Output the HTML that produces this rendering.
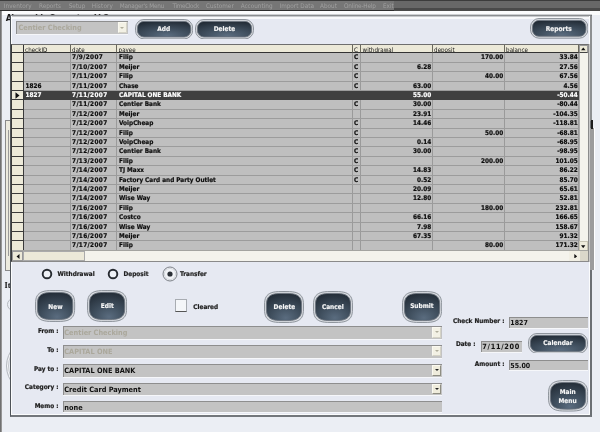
<!DOCTYPE html>
<html><head><meta charset="utf-8"><title>Checking</title>
<style>
*{box-sizing:border-box;margin:0;padding:0}
html,body{width:600px;height:432px;overflow:hidden;background:#ebeef4;font-family:"DejaVu Sans Condensed","Liberation Sans",sans-serif;}
.abs{position:absolute}
#menubar{position:absolute;left:0;top:0;width:600px;height:12px;background:linear-gradient(#3c3c3c 0,#3c3c3c 1px,#686868 1px,#686868 8px,#4a4a4a 8px,#4a4a4a 11px,#a0a0a0 11px)}
#mstrip{position:absolute;left:0;top:1px;width:394px;height:11px;background:linear-gradient(#767676 0,#767676 9px,#2e2e2e 9px,#2e2e2e 10px,#8c8c8c 10px)}
#menubar span{position:absolute;top:1.7px;font-size:6.35px;line-height:8px;color:#a0a0a0;white-space:nowrap}
#dlg{position:absolute;left:10px;top:15px;width:582px;height:402px;background:#e6e9f2;border:1px solid #4e5358;border-right:2px solid #6c7074;border-bottom:2px solid #73777c;border-top:1px solid #8a8d90;box-shadow:inset 1px 0 0 #fbfcfd,inset -1px -1px 0 #fbfcfd,inset 0 1px 0 #c6c8cb,inset 0 3px 0 #f8f9fb, 0 -1px 0 #cdcfd2}
#grid{position:absolute;left:11px;top:43.7px;width:578px;height:218.5px;background:#bfbfbf;border:1px solid #3a3a3a;border-top:1px solid #6e6e6e;border-right:1px solid #8c8c8c;border-bottom:1px solid #8a8a8a}
.hdr{position:absolute;top:44.6px;height:8.4px;background:#ece9d8;border-right:1px solid #6a685c;border-bottom:1px solid #333;font-size:6.2px;line-height:9.6px;color:#111;padding-left:1.6px;white-space:nowrap;overflow:hidden}
.row{position:absolute;left:12px;width:567px;height:9.4px;background:#bfbfbf;border-bottom:1px solid #9c9c9c;font-weight:bold;font-size:6.4px;line-height:9.6px;color:#0c0c0c;-webkit-text-stroke:0.18px}
.row.sel{background:#404040;color:#fff;border-bottom-color:#404040}
.c{position:absolute;top:0;height:100%;border-right:1px solid #9a9a9a;white-space:nowrap;overflow:hidden;padding-left:2px}
.sel .c{border-right-color:#404040}
.row .c0{left:0;width:11.5px;height:9.4px;background:#ece9d8;border-bottom:1px solid #3a3a3a;border-right:1px solid #3a3a3a}
.c1{left:11.5px;width:47px}
.c2{left:58.5px;width:46.5px;letter-spacing:0.38px;padding-left:1.5px}
.c3{left:105px;width:235.5px}
.c4{left:340.5px;width:8.5px;padding-left:1.5px}
.c5{left:349px;width:71.5px;text-align:right;padding-right:0.3px}
.c6{left:420.5px;width:72px;text-align:right;padding-right:0.3px}
.c7{left:492.5px;width:74.5px;text-align:right;padding-right:0.3px}
.btn{position:absolute}
.btn svg{position:absolute;left:0;top:0;display:block}
.btn i{position:absolute;left:0;top:0;right:0;bottom:0;font-style:normal;color:#f6f6f6;font-weight:bold;font-size:6.5px;display:flex;align-items:center;justify-content:center;text-align:center;line-height:8.3px;-webkit-text-stroke:0.15px #f6f6f6}
.lbl{position:absolute;margin-top:0.9px;-webkit-text-stroke:0.2px #1c1c1c;font-weight:bold;font-size:6.4px;line-height:9px;color:#1c1c1c;white-space:nowrap}
.lbl.r{text-align:right}
.fld{position:absolute;box-shadow:0 1px 0 #f6f7fa;background:#c3c3c3;border-top:1px solid #8e8e8e;border-left:1px solid #8e8e8e;font-weight:bold;font-size:7.3px;color:#111;padding-left:0.8px;white-space:nowrap;overflow:hidden}
.fld.dis{color:#aba89c}
.dd{position:absolute;width:9px;height:10.4px;background:#efecdc;border:1px solid #fbfaf2;border-right-color:#8f8e82;border-bottom-color:#8f8e82}
.dd.dis{background:#f3f1e5;border-color:#faf9f1;border-right-color:#d5d3c6;border-bottom-color:#d5d3c6}
.dd:after{content:"";position:absolute;left:1.3px;top:3.2px;border:2.2px solid transparent;border-top:2.6px solid #222;border-bottom:0}
.dd.dis:after{border-top-color:#b0ad9c}
.radio{position:absolute;width:12px;height:12px}
</style></head><body><div id="wrap" style="position:absolute;left:0;top:0;width:600px;height:432px;will-change:transform">
<svg width="0" height="0" style="position:absolute"><defs><radialGradient id="bg" cx="0.55" cy="0.9" r="0.95"><stop offset="0" stop-color="#5a6c7f"/><stop offset="0.45" stop-color="#3f4e5d"/><stop offset="1" stop-color="#212a34"/></radialGradient></defs></svg>
<div id="menubar"><div id="mstrip"></div><span style="left:3.7px;letter-spacing:0.08px">Inventory</span><span style="left:39px;letter-spacing:0px">Reports</span><span style="left:68.7px;letter-spacing:0px">Setup</span><span style="left:91.7px;letter-spacing:0.15px">History</span><span style="left:119.7px;letter-spacing:-0.18px">Manager's Menu</span><span style="left:172.5px;letter-spacing:-0.33px">TimeClock</span><span style="left:206px;letter-spacing:0px">Customer</span><span style="left:240.7px;letter-spacing:0px">Accounting</span><span style="left:279.5px;letter-spacing:0px">Import Data</span><span style="left:320px;letter-spacing:0px">About</span><span style="left:344px;letter-spacing:-0.16px">Online-Help</span><span style="left:383px;letter-spacing:0px">Exit</span></div>
<div class="abs" style="left:2px;top:11px;width:598px;height:4px;background:#fbfcfd"></div>
<div class="abs" style="left:0;top:11px;width:2.2px;height:421px;background:linear-gradient(90deg,#5e5e5e,#a8a8a8)"></div>
<div class="abs" style="left:5.8px;top:11.9px;font-weight:bold;font-size:9.3px;line-height:11px;color:#1a1a1a;white-space:nowrap;letter-spacing:-0.95px">Alexandria Computers LLC</div>
<div class="abs" style="left:5.3px;top:119.5px;width:6px;height:151px;background:#eceade;border:1px solid #8a8a8a"></div>
<div class="abs" style="left:8.3px;top:130px;width:3px;height:126px;border-left:1px solid #9a9a9a"></div>
<div class="abs" style="left:4.6px;top:280.5px;font-family:'Liberation Serif',serif;font-weight:bold;font-size:8.3px;line-height:10px;color:#111">It</div>
<div class="abs" style="left:7px;top:297.5px;width:13px;height:13px;border-radius:50%;border:1px solid #b4b8be"></div>
<div class="abs" style="left:6px;top:338px;width:56px;height:56px;border-radius:50%;border:1px solid #b4b8be;box-shadow:inset 0 0 0 1px #f8f9fb, inset 0 0 0 2px #c4c8cd"></div>
<div id="dlg"></div>
<div class="abs" style="left:11px;top:11.9px;height:3.6px;width:110px;overflow:hidden"><div class="abs" style="left:-5.2px;top:0;font-weight:bold;font-size:9.3px;line-height:11px;color:#333;white-space:nowrap;letter-spacing:-0.95px">Alexandria Computers LLC</div></div>

<div class="abs" style="left:590px;top:16px;width:2px;height:105px;background:#8e9092"></div>
<div class="abs" style="left:590px;top:128px;width:4px;height:142px;background:#9c9c9c"></div>
<div class="abs" style="left:591px;top:120px;width:2px;height:9px;background:#1c1c1c"></div>
<div class="abs" style="left:594px;top:128px;width:1px;height:142px;background:#fff"></div>
<!-- top controls -->
<div class="fld dis" style="left:16px;top:21px;width:111.5px;height:13px;line-height:12px;padding-left:1.5px">Centier Checking</div>
<div class="dd dis" style="left:117.6px;top:22.4px;height:10.8px"></div>
<div class="btn" style="left:134.6px;top:18.5px;width:58.2px;height:20.4px"><svg width="58.2" height="20.4" viewBox="0 0 58.2 20.4"><rect x="0.5" y="0.5" width="57.2" height="19.4" rx="8.5" ry="8.5" fill="#d9dce1" stroke="#858b93" stroke-width="0.9"/><rect x="2.4" y="2.4" width="53.400000000000006" height="15.599999999999998" rx="6.5" ry="6.5" fill="url(#bg)" stroke="#6c747e" stroke-width="0.9"/></svg><i style="padding-top:1.6px">Add</i></div>
<div class="btn" style="left:195px;top:18.5px;width:59px;height:20.4px"><svg width="59" height="20.4" viewBox="0 0 59 20.4"><rect x="0.5" y="0.5" width="58" height="19.4" rx="8.5" ry="8.5" fill="#d9dce1" stroke="#858b93" stroke-width="0.9"/><rect x="2.4" y="2.4" width="54.2" height="15.599999999999998" rx="6.5" ry="6.5" fill="url(#bg)" stroke="#6c747e" stroke-width="0.9"/></svg><i style="padding-top:1.6px">Delete</i></div>
<div class="btn" style="left:529.6px;top:18.1px;width:58.4px;height:20.7px"><svg width="58.4" height="20.7" viewBox="0 0 58.4 20.7"><rect x="0.5" y="0.5" width="57.4" height="19.7" rx="8.5" ry="8.5" fill="#d9dce1" stroke="#858b93" stroke-width="0.9"/><rect x="2.4" y="2.4" width="53.6" height="15.899999999999999" rx="6.5" ry="6.5" fill="url(#bg)" stroke="#6c747e" stroke-width="0.9"/></svg><i style="padding-top:1.6px">Reports</i></div>

<!-- grid -->
<div id="grid"></div><div class="abs" style="left:589px;top:44px;width:1px;height:218px;background:#c8c8c8"></div>
<div class="hdr" style="left:12px;width:11.5px;border-right-color:#333"></div>
<div class="hdr" style="left:23.5px;width:47px">checkID</div>
<div class="hdr" style="left:70.5px;width:46.5px">date</div>
<div class="hdr" style="left:117px;width:235.5px">payee</div>
<div class="hdr" style="left:352.5px;width:8.5px;padding-left:1.5px">C</div>
<div class="hdr" style="left:361px;width:71.5px">withdrawal</div>
<div class="hdr" style="left:432.5px;width:72px">deposit</div>
<div class="hdr" style="left:504.5px;width:74.5px">balance</div>
<div class="row" style="top:53.4px"><span class="c c0"></span><span class="c c1"></span><span class="c c2">7/9/2007</span><span class="c c3">Filip</span><span class="c c4">C</span><span class="c c5"></span><span class="c c6">170.00</span><span class="c c7">33.84</span></div>
<div class="row" style="top:62.8px"><span class="c c0"></span><span class="c c1"></span><span class="c c2">7/10/2007</span><span class="c c3">Meijer</span><span class="c c4">C</span><span class="c c5">6.28</span><span class="c c6"></span><span class="c c7">27.56</span></div>
<div class="row" style="top:72.2px"><span class="c c0"></span><span class="c c1"></span><span class="c c2">7/11/2007</span><span class="c c3">Filip</span><span class="c c4">C</span><span class="c c5"></span><span class="c c6">40.00</span><span class="c c7">67.56</span></div>
<div class="row" style="top:81.6px"><span class="c c0"></span><span class="c c1">1826</span><span class="c c2">7/11/2007</span><span class="c c3">Chase</span><span class="c c4">C</span><span class="c c5">63.00</span><span class="c c6"></span><span class="c c7">4.56</span></div>
<div class="row sel" style="top:91.0px"><span class="c c0"></span><span class="c c1">1827</span><span class="c c2">7/11/2007</span><span class="c c3">CAPITAL ONE BANK</span><span class="c c4"></span><span class="c c5">55.00</span><span class="c c6"></span><span class="c c7">-50.44</span></div>
<div class="row" style="top:100.4px"><span class="c c0"></span><span class="c c1"></span><span class="c c2">7/11/2007</span><span class="c c3">Centier Bank</span><span class="c c4">C</span><span class="c c5">30.00</span><span class="c c6"></span><span class="c c7">-80.44</span></div>
<div class="row" style="top:109.8px"><span class="c c0"></span><span class="c c1"></span><span class="c c2">7/12/2007</span><span class="c c3">Meijer</span><span class="c c4"></span><span class="c c5">23.91</span><span class="c c6"></span><span class="c c7">-104.35</span></div>
<div class="row" style="top:119.2px"><span class="c c0"></span><span class="c c1"></span><span class="c c2">7/12/2007</span><span class="c c3">VoipCheap</span><span class="c c4">C</span><span class="c c5">14.46</span><span class="c c6"></span><span class="c c7">-118.81</span></div>
<div class="row" style="top:128.6px"><span class="c c0"></span><span class="c c1"></span><span class="c c2">7/12/2007</span><span class="c c3">Filip</span><span class="c c4">C</span><span class="c c5"></span><span class="c c6">50.00</span><span class="c c7">-68.81</span></div>
<div class="row" style="top:138.0px"><span class="c c0"></span><span class="c c1"></span><span class="c c2">7/12/2007</span><span class="c c3">VoipCheap</span><span class="c c4">C</span><span class="c c5">0.14</span><span class="c c6"></span><span class="c c7">-68.95</span></div>
<div class="row" style="top:147.4px"><span class="c c0"></span><span class="c c1"></span><span class="c c2">7/12/2007</span><span class="c c3">Centier Bank</span><span class="c c4">C</span><span class="c c5">30.00</span><span class="c c6"></span><span class="c c7">-98.95</span></div>
<div class="row" style="top:156.8px"><span class="c c0"></span><span class="c c1"></span><span class="c c2">7/13/2007</span><span class="c c3">Filip</span><span class="c c4">C</span><span class="c c5"></span><span class="c c6">200.00</span><span class="c c7">101.05</span></div>
<div class="row" style="top:166.2px"><span class="c c0"></span><span class="c c1"></span><span class="c c2">7/14/2007</span><span class="c c3">TJ Maxx</span><span class="c c4">C</span><span class="c c5">14.83</span><span class="c c6"></span><span class="c c7">86.22</span></div>
<div class="row" style="top:175.6px"><span class="c c0"></span><span class="c c1"></span><span class="c c2">7/14/2007</span><span class="c c3">Factory Card and Party Outlet</span><span class="c c4">C</span><span class="c c5">0.52</span><span class="c c6"></span><span class="c c7">85.70</span></div>
<div class="row" style="top:185.0px"><span class="c c0"></span><span class="c c1"></span><span class="c c2">7/14/2007</span><span class="c c3">Meijer</span><span class="c c4"></span><span class="c c5">20.09</span><span class="c c6"></span><span class="c c7">65.61</span></div>
<div class="row" style="top:194.4px"><span class="c c0"></span><span class="c c1"></span><span class="c c2">7/14/2007</span><span class="c c3">Wise Way</span><span class="c c4"></span><span class="c c5">12.80</span><span class="c c6"></span><span class="c c7">52.81</span></div>
<div class="row" style="top:203.8px"><span class="c c0"></span><span class="c c1"></span><span class="c c2">7/16/2007</span><span class="c c3">Filip</span><span class="c c4"></span><span class="c c5"></span><span class="c c6">180.00</span><span class="c c7">232.81</span></div>
<div class="row" style="top:213.2px"><span class="c c0"></span><span class="c c1"></span><span class="c c2">7/16/2007</span><span class="c c3">Costco</span><span class="c c4"></span><span class="c c5">66.16</span><span class="c c6"></span><span class="c c7">166.65</span></div>
<div class="row" style="top:222.6px"><span class="c c0"></span><span class="c c1"></span><span class="c c2">7/16/2007</span><span class="c c3">Wise Way</span><span class="c c4"></span><span class="c c5">7.98</span><span class="c c6"></span><span class="c c7">158.67</span></div>
<div class="row" style="top:232.0px"><span class="c c0"></span><span class="c c1"></span><span class="c c2">7/16/2007</span><span class="c c3">Meijer</span><span class="c c4"></span><span class="c c5">67.35</span><span class="c c6"></span><span class="c c7">91.32</span></div>
<div class="row" style="top:241.4px"><span class="c c0"></span><span class="c c1"></span><span class="c c2">7/17/2007</span><span class="c c3">Filip</span><span class="c c4"></span><span class="c c5"></span><span class="c c6">80.00</span><span class="c c7">171.32</span></div>
<!-- row pointer -->
<svg class="abs" style="left:15px;top:92px" width="5" height="7" viewBox="0 0 5 7"><path d="M0.5 0.3 L4.5 3.5 L0.5 6.7 Z" fill="#111"/></svg>
<!-- v scrollbar -->
<div class="abs" style="left:579px;top:44.6px;width:9px;height:206px;background:#f4f3ec;border-left:1px solid #aaa"></div>
<div class="abs" style="left:579px;top:44.6px;width:9px;height:8.4px;background:#ece9d8;border:1px solid #999;border-bottom-color:#444"></div>
<svg class="abs" style="left:581.2px;top:47px" width="4.6" height="3.6" viewBox="0 0 5 4"><path d="M0 3.5 L2.5 0.5 L5 3.5 Z" fill="#111"/></svg>
<div class="abs" style="left:579px;top:241px;width:9px;height:9.5px;background:#efecdd;border:1px solid #c9c6b6"></div>
<svg class="abs" style="left:581.3px;top:245px" width="4.4" height="3.4" viewBox="0 0 4.4 3.4"><path d="M0 0.3 L2.2 3.2 L4.4 0.3 Z" fill="#111"/></svg>
<!-- h scrollbar -->
<div class="abs" style="left:12px;top:250.4px;width:576px;height:10.8px;background:#f4f3ec;border-top:1px solid #a4a4a0"></div>
<div class="abs" style="left:12px;top:251px;width:11px;height:10px;background:#ece9d8;border:1px solid #999"></div>
<svg class="abs" style="left:16px;top:253.5px" width="4" height="5" viewBox="0 0 4 5"><path d="M3.5 0 L0.5 2.5 L3.5 5 Z" fill="#111"/></svg>
<div class="abs" style="left:23px;top:251px;width:62px;height:10px;background:#ece9d8;border:1px solid #aaa"></div>
<div class="abs" style="left:569px;top:251px;width:10.5px;height:10px;background:#f1efe4"></div>
<svg class="abs" style="left:573.8px;top:253.6px" width="3.4" height="4.6" viewBox="0 0 3.4 4.6"><path d="M0.3 0 L3.2 2.3 L0.3 4.6 Z" fill="#111"/></svg>
<div class="abs" style="left:579.6px;top:251px;width:8.4px;height:9.6px;background:#dad7ca"></div>

<!-- radios -->
<svg class="abs" style="left:41.2px;top:267.7px" width="12" height="12" viewBox="0 0 12 12"><circle cx="6" cy="6" r="4.3" fill="#eef1f6" stroke="#262a30" stroke-width="1.9"/></svg><div class="lbl" style="left:57.5px;top:269.2px">Withdrawal</div>
<svg class="abs" style="left:107.4px;top:267.7px" width="12" height="12" viewBox="0 0 12 12"><circle cx="6" cy="6" r="4.3" fill="#eef1f6" stroke="#262a30" stroke-width="1.9"/></svg><div class="lbl" style="left:123.5px;top:269.2px">Deposit</div>
<svg class="abs" style="left:161.5px;top:265.7px" width="16" height="16" viewBox="0 0 16 16"><circle cx="8" cy="8" r="7" fill="#f1f3f7" stroke="#6e737a" stroke-width="0.9"/><circle cx="8" cy="8" r="5.6" fill="none" stroke="#c9cdd3" stroke-width="0.7"/><circle cx="8" cy="8" r="2.6" fill="#2a2f36"/></svg><div class="lbl" style="left:180px;top:269.2px">Transfer</div>

<!-- buttons row -->
<div class="btn" style="left:35.4px;top:290.4px;width:40.2px;height:32px"><svg width="40.2" height="32" viewBox="0 0 40.2 32"><path d="M39.70 16.00L39.60 20.51L39.29 22.83L38.78 24.66L38.06 26.18L37.13 27.47L35.99 28.56L34.61 29.47L32.98 30.21L31.05 30.77L28.74 31.18L25.81 31.42L20.10 31.50L14.39 31.42L11.46 31.18L9.15 30.77L7.22 30.21L5.59 29.47L4.21 28.56L3.07 27.47L2.14 26.18L1.42 24.66L0.91 22.83L0.60 20.51L0.50 16.00L0.60 11.49L0.91 9.17L1.42 7.34L2.14 5.82L3.07 4.53L4.21 3.44L5.59 2.53L7.22 1.79L9.15 1.23L11.46 0.82L14.39 0.58L20.10 0.50L25.81 0.58L28.74 0.82L31.05 1.23L32.98 1.79L34.61 2.53L35.99 3.44L37.13 4.53L38.06 5.82L38.78 7.34L39.29 9.17L39.60 11.49Z" fill="#d9dce1" stroke="#858b93" stroke-width="0.9"/><path d="M37.80 16.00L37.71 19.96L37.43 21.99L36.97 23.60L36.32 24.94L35.48 26.07L34.45 27.02L33.20 27.82L31.73 28.46L29.99 28.96L27.90 29.32L25.25 29.53L20.10 29.60L14.95 29.53L12.30 29.32L10.21 28.96L8.47 28.46L7.00 27.82L5.75 27.02L4.72 26.07L3.88 24.94L3.23 23.60L2.77 21.99L2.49 19.96L2.40 16.00L2.49 12.04L2.77 10.01L3.23 8.40L3.88 7.06L4.72 5.93L5.75 4.98L7.00 4.18L8.47 3.54L10.21 3.04L12.30 2.68L14.95 2.47L20.10 2.40L25.25 2.47L27.90 2.68L29.99 3.04L31.73 3.54L33.20 4.18L34.45 4.98L35.48 5.93L36.32 7.06L36.97 8.40L37.43 10.01L37.71 12.04Z" fill="url(#bg)" stroke="#6c747e" stroke-width="0.9"/></svg><i style="padding-top:0.6px">New</i></div>
<div class="btn" style="left:87.2px;top:289.7px;width:40.2px;height:32px"><svg width="40.2" height="32" viewBox="0 0 40.2 32"><path d="M39.70 16.00L39.60 20.51L39.29 22.83L38.78 24.66L38.06 26.18L37.13 27.47L35.99 28.56L34.61 29.47L32.98 30.21L31.05 30.77L28.74 31.18L25.81 31.42L20.10 31.50L14.39 31.42L11.46 31.18L9.15 30.77L7.22 30.21L5.59 29.47L4.21 28.56L3.07 27.47L2.14 26.18L1.42 24.66L0.91 22.83L0.60 20.51L0.50 16.00L0.60 11.49L0.91 9.17L1.42 7.34L2.14 5.82L3.07 4.53L4.21 3.44L5.59 2.53L7.22 1.79L9.15 1.23L11.46 0.82L14.39 0.58L20.10 0.50L25.81 0.58L28.74 0.82L31.05 1.23L32.98 1.79L34.61 2.53L35.99 3.44L37.13 4.53L38.06 5.82L38.78 7.34L39.29 9.17L39.60 11.49Z" fill="#d9dce1" stroke="#858b93" stroke-width="0.9"/><path d="M37.80 16.00L37.71 19.96L37.43 21.99L36.97 23.60L36.32 24.94L35.48 26.07L34.45 27.02L33.20 27.82L31.73 28.46L29.99 28.96L27.90 29.32L25.25 29.53L20.10 29.60L14.95 29.53L12.30 29.32L10.21 28.96L8.47 28.46L7.00 27.82L5.75 27.02L4.72 26.07L3.88 24.94L3.23 23.60L2.77 21.99L2.49 19.96L2.40 16.00L2.49 12.04L2.77 10.01L3.23 8.40L3.88 7.06L4.72 5.93L5.75 4.98L7.00 4.18L8.47 3.54L10.21 3.04L12.30 2.68L14.95 2.47L20.10 2.40L25.25 2.47L27.90 2.68L29.99 3.04L31.73 3.54L33.20 4.18L34.45 4.98L35.48 5.93L36.32 7.06L36.97 8.40L37.43 10.01L37.71 12.04Z" fill="url(#bg)" stroke="#6c747e" stroke-width="0.9"/></svg><i style="">Edit</i></div>
<div class="abs" style="left:175.3px;top:299px;width:11.7px;height:12.7px;background:#f4f6f9;border:1px solid #a8acb2;border-bottom:1.3px solid #555"></div>
<div class="lbl" style="left:193.3px;top:302.2px">Cleared</div>
<div class="btn" style="left:264.4px;top:290.7px;width:40px;height:32px"><svg width="40" height="32" viewBox="0 0 40 32"><path d="M39.50 16.00L39.40 20.51L39.09 22.83L38.59 24.66L37.87 26.18L36.95 27.47L35.81 28.56L34.43 29.47L32.81 30.21L30.89 30.77L28.60 31.18L25.68 31.42L20.00 31.50L14.32 31.42L11.40 31.18L9.11 30.77L7.19 30.21L5.57 29.47L4.19 28.56L3.05 27.47L2.13 26.18L1.41 24.66L0.91 22.83L0.60 20.51L0.50 16.00L0.60 11.49L0.91 9.17L1.41 7.34L2.13 5.82L3.05 4.53L4.19 3.44L5.57 2.53L7.19 1.79L9.11 1.23L11.40 0.82L14.32 0.58L20.00 0.50L25.68 0.58L28.60 0.82L30.89 1.23L32.81 1.79L34.43 2.53L35.81 3.44L36.95 4.53L37.87 5.82L38.59 7.34L39.09 9.17L39.40 11.49Z" fill="#d9dce1" stroke="#858b93" stroke-width="0.9"/><path d="M37.60 16.00L37.51 19.96L37.23 21.99L36.78 23.60L36.13 24.94L35.30 26.07L34.27 27.02L33.03 27.82L31.56 28.46L29.83 28.96L27.76 29.32L25.12 29.53L20.00 29.60L14.88 29.53L12.24 29.32L10.17 28.96L8.44 28.46L6.97 27.82L5.73 27.02L4.70 26.07L3.87 24.94L3.22 23.60L2.77 21.99L2.49 19.96L2.40 16.00L2.49 12.04L2.77 10.01L3.22 8.40L3.87 7.06L4.70 5.93L5.73 4.98L6.97 4.18L8.44 3.54L10.17 3.04L12.24 2.68L14.88 2.47L20.00 2.40L25.12 2.47L27.76 2.68L29.83 3.04L31.56 3.54L33.03 4.18L34.27 4.98L35.30 5.93L36.13 7.06L36.78 8.40L37.23 10.01L37.51 12.04Z" fill="url(#bg)" stroke="#6c747e" stroke-width="0.9"/></svg><i style="">Delete</i></div>
<div class="btn" style="left:312.8px;top:290.7px;width:40px;height:32px"><svg width="40" height="32" viewBox="0 0 40 32"><path d="M39.50 16.00L39.40 20.51L39.09 22.83L38.59 24.66L37.87 26.18L36.95 27.47L35.81 28.56L34.43 29.47L32.81 30.21L30.89 30.77L28.60 31.18L25.68 31.42L20.00 31.50L14.32 31.42L11.40 31.18L9.11 30.77L7.19 30.21L5.57 29.47L4.19 28.56L3.05 27.47L2.13 26.18L1.41 24.66L0.91 22.83L0.60 20.51L0.50 16.00L0.60 11.49L0.91 9.17L1.41 7.34L2.13 5.82L3.05 4.53L4.19 3.44L5.57 2.53L7.19 1.79L9.11 1.23L11.40 0.82L14.32 0.58L20.00 0.50L25.68 0.58L28.60 0.82L30.89 1.23L32.81 1.79L34.43 2.53L35.81 3.44L36.95 4.53L37.87 5.82L38.59 7.34L39.09 9.17L39.40 11.49Z" fill="#d9dce1" stroke="#858b93" stroke-width="0.9"/><path d="M37.60 16.00L37.51 19.96L37.23 21.99L36.78 23.60L36.13 24.94L35.30 26.07L34.27 27.02L33.03 27.82L31.56 28.46L29.83 28.96L27.76 29.32L25.12 29.53L20.00 29.60L14.88 29.53L12.24 29.32L10.17 28.96L8.44 28.46L6.97 27.82L5.73 27.02L4.70 26.07L3.87 24.94L3.22 23.60L2.77 21.99L2.49 19.96L2.40 16.00L2.49 12.04L2.77 10.01L3.22 8.40L3.87 7.06L4.70 5.93L5.73 4.98L6.97 4.18L8.44 3.54L10.17 3.04L12.24 2.68L14.88 2.47L20.00 2.40L25.12 2.47L27.76 2.68L29.83 3.04L31.56 3.54L33.03 4.18L34.27 4.98L35.30 5.93L36.13 7.06L36.78 8.40L37.23 10.01L37.51 12.04Z" fill="url(#bg)" stroke="#6c747e" stroke-width="0.9"/></svg><i style="">Cancel</i></div>
<div class="btn" style="left:401.8px;top:290.6px;width:40.2px;height:32px"><svg width="40.2" height="32" viewBox="0 0 40.2 32"><path d="M39.70 16.00L39.60 20.51L39.29 22.83L38.78 24.66L38.06 26.18L37.13 27.47L35.99 28.56L34.61 29.47L32.98 30.21L31.05 30.77L28.74 31.18L25.81 31.42L20.10 31.50L14.39 31.42L11.46 31.18L9.15 30.77L7.22 30.21L5.59 29.47L4.21 28.56L3.07 27.47L2.14 26.18L1.42 24.66L0.91 22.83L0.60 20.51L0.50 16.00L0.60 11.49L0.91 9.17L1.42 7.34L2.14 5.82L3.07 4.53L4.21 3.44L5.59 2.53L7.22 1.79L9.15 1.23L11.46 0.82L14.39 0.58L20.10 0.50L25.81 0.58L28.74 0.82L31.05 1.23L32.98 1.79L34.61 2.53L35.99 3.44L37.13 4.53L38.06 5.82L38.78 7.34L39.29 9.17L39.60 11.49Z" fill="#d9dce1" stroke="#858b93" stroke-width="0.9"/><path d="M37.80 16.00L37.71 19.96L37.43 21.99L36.97 23.60L36.32 24.94L35.48 26.07L34.45 27.02L33.20 27.82L31.73 28.46L29.99 28.96L27.90 29.32L25.25 29.53L20.10 29.60L14.95 29.53L12.30 29.32L10.21 28.96L8.47 28.46L7.00 27.82L5.75 27.02L4.72 26.07L3.88 24.94L3.23 23.60L2.77 21.99L2.49 19.96L2.40 16.00L2.49 12.04L2.77 10.01L3.23 8.40L3.88 7.06L4.72 5.93L5.75 4.98L7.00 4.18L8.47 3.54L10.21 3.04L12.30 2.68L14.95 2.47L20.10 2.40L25.25 2.47L27.90 2.68L29.99 3.04L31.73 3.54L33.20 4.18L34.45 4.98L35.48 5.93L36.32 7.06L36.97 8.40L37.43 10.01L37.71 12.04Z" fill="url(#bg)" stroke="#6c747e" stroke-width="0.9"/></svg><i style="">Submit</i></div>

<!-- form -->
<div class="lbl r" style="left:8px;width:50.5px;top:325.8px">From :</div>
<div class="fld dis" style="left:62.5px;top:326.3px;width:379.5px;height:12.4px;line-height:11.5px">Centier Checking</div><div class="dd dis" style="left:432.3px;top:327.3px"></div>
<div class="lbl r" style="left:8px;width:50.5px;top:344.7px">To :</div>
<div class="fld dis" style="left:62.5px;top:345px;width:379.5px;height:12.5px;line-height:11.5px">CAPITAL ONE</div><div class="dd dis" style="left:432.3px;top:346px"></div>
<div class="lbl r" style="left:8px;width:50.5px;top:363.8px">Pay to :</div>
<div class="fld" style="left:62.5px;top:364.2px;width:379.5px;height:12.5px;line-height:12px">CAPITAL ONE BANK</div><div class="dd" style="left:432.3px;top:365.2px"></div>
<div class="lbl r" style="left:8px;width:50.5px;top:382.2px">Category :</div>
<div class="fld" style="left:62.5px;top:383px;width:379.5px;height:12.3px;line-height:12px">Credit Card Payment</div><div class="dd" style="left:432.3px;top:384px"></div>
<div class="lbl r" style="left:8px;width:50.5px;top:400.8px">Memo :</div>
<div class="fld" style="left:62.5px;top:401.3px;width:379.5px;height:11.2px;line-height:11px">none</div>

<div class="lbl r" style="left:440px;width:64.5px;top:316px">Check Number :</div>
<div class="fld" style="left:508.5px;top:317.3px;width:79.5px;height:10.4px;line-height:10.6px;font-size:7px">1827</div>
<div class="lbl r" style="left:440px;width:35.5px;top:339.5px">Date :</div>
<div class="fld" style="left:480.5px;top:340.6px;width:41.5px;height:11px;line-height:10.5px;letter-spacing:0.7px">7/11/200</div>
<div class="btn" style="left:528px;top:332.6px;width:60px;height:20.8px"><svg width="60" height="20.8" viewBox="0 0 60 20.8"><rect x="0.5" y="0.5" width="59" height="19.8" rx="8.5" ry="8.5" fill="#d9dce1" stroke="#858b93" stroke-width="0.9"/><rect x="2.4" y="2.4" width="55.2" height="16.0" rx="6.5" ry="6.5" fill="url(#bg)" stroke="#6c747e" stroke-width="0.9"/></svg><i style="">Calendar</i></div>
<div class="lbl r" style="left:440px;width:64.5px;top:358.7px">Amount :</div>
<div class="fld" style="left:508.5px;top:360px;width:79.5px;height:10.2px;line-height:10.6px;font-size:7px">55.00</div>
<div class="btn" style="left:547.5px;top:380px;width:40.2px;height:31.6px"><svg width="40.2" height="31.6" viewBox="0 0 40.2 31.6"><path d="M39.70 15.80L39.60 20.25L39.29 22.54L38.78 24.35L38.06 25.85L37.13 27.13L35.99 28.20L34.61 29.10L32.98 29.82L31.05 30.38L28.74 30.78L25.81 31.02L20.10 31.10L14.39 31.02L11.46 30.78L9.15 30.38L7.22 29.82L5.59 29.10L4.21 28.20L3.07 27.13L2.14 25.85L1.42 24.35L0.91 22.54L0.60 20.25L0.50 15.80L0.60 11.35L0.91 9.06L1.42 7.25L2.14 5.75L3.07 4.47L4.21 3.40L5.59 2.50L7.22 1.78L9.15 1.22L11.46 0.82L14.39 0.58L20.10 0.50L25.81 0.58L28.74 0.82L31.05 1.22L32.98 1.78L34.61 2.50L35.99 3.40L37.13 4.47L38.06 5.75L38.78 7.25L39.29 9.06L39.60 11.35Z" fill="#d9dce1" stroke="#858b93" stroke-width="0.9"/><path d="M37.80 15.80L37.71 19.70L37.43 21.71L36.97 23.29L36.32 24.60L35.48 25.72L34.45 26.66L33.20 27.45L31.73 28.08L29.99 28.57L27.90 28.92L25.25 29.13L20.10 29.20L14.95 29.13L12.30 28.92L10.21 28.57L8.47 28.08L7.00 27.45L5.75 26.66L4.72 25.72L3.88 24.60L3.23 23.29L2.77 21.71L2.49 19.70L2.40 15.80L2.49 11.90L2.77 9.89L3.23 8.31L3.88 7.00L4.72 5.88L5.75 4.94L7.00 4.15L8.47 3.52L10.21 3.03L12.30 2.68L14.95 2.47L20.10 2.40L25.25 2.47L27.90 2.68L29.99 3.03L31.73 3.52L33.20 4.15L34.45 4.94L35.48 5.88L36.32 7.00L36.97 8.31L37.43 9.89L37.71 11.90Z" fill="url(#bg)" stroke="#6c747e" stroke-width="0.9"/></svg><i style="line-height:8.9px;padding-top:2.2px">Main<br>Menu</i></div>
</div></body></html>
